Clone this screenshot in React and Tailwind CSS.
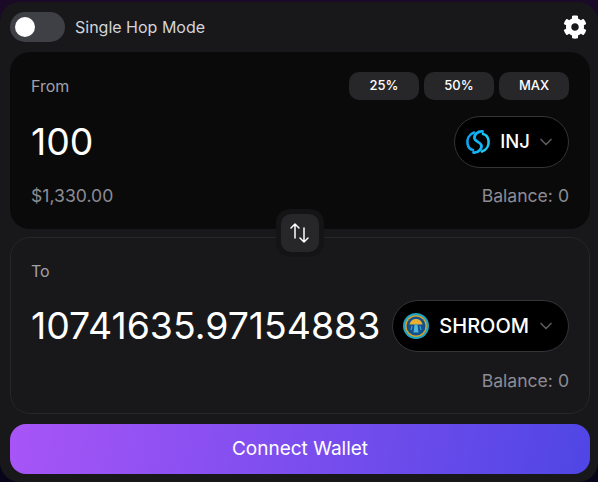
import React from "react";
import { ChevronDown } from "lucide-react";
import { FaCog } from "react-icons/fa";

function SwapArrows() {
  return (
    <svg viewBox="0 0 24 24" className="w-[24px] h-[24px]" fill="none" stroke="#fff" strokeWidth="1.500" strokeLinecap="round" strokeLinejoin="round">
      <path d="M7 17V3M3 7l4-4 4 4" />
      <path d="M16 7v14M12 17l4 4 4-4" />
    </svg>
  );
}

function InjIcon() {
  return (
    <svg viewBox="0 0 26 26" className="w-[26px] h-[26px]" fill="none" strokeLinecap="round">
      <path d="M9 3.500C4 5.500 1.800 10 2.500 14.500 3 18 5.500 20.500 8 21" stroke="#0ea5f0" strokeWidth="2.600" />
      <path d="M17 22.500C22 20.500 24.200 16 23.500 11.500 23 8 20.500 5.500 18 5" stroke="#1cc8f5" strokeWidth="2.600" />
      <path d="M17.500 2.500C13 2 9 5.500 9.500 9.500 10 12.500 15 13 16.300 16 17.300 19.500 13.500 24 8.500 23.500" stroke="#12b4f5" strokeWidth="2.800" />
    </svg>
  );
}

function ShroomIcon() {
  return (
    <svg viewBox="0 0 26 26" className="w-[26px] h-[26px]">
      <circle cx="13" cy="13" r="13" fill="#1fa5c4" />
      <circle cx="13" cy="13" r="10.800" fill="#e0a020" />
      <circle cx="13" cy="13" r="9.500" fill="#12508f" />
      <path d="M6.500 11.500C7.500 7.500 10 6 13 6s5.500 1.500 6.500 5.500z" fill="#e8b030" />
      <path d="M11.500 11.500h3l1 8h-5z" fill="#4fb4d8" />
      <path d="M9 13l-1 4M17 13l1 4" stroke="#3aa0c8" strokeWidth="1.200" />
    </svg>
  );
}

function TokenButton({ icon, label, labelClass, chevronClass }) {
  return (
    <button className="h-[52px] flex items-center rounded-full bg-black border border-[#333338] pl-[10px] pr-[12px] shrink-0">
      {icon}
      <span className={`font-medium text-white ${labelClass}`}>{label}</span>
      <ChevronDown className={`w-[20px] h-[20px] text-[#5a5a60] ${chevronClass}`} strokeWidth={2} />
    </button>
  );
}

function Pct({ children }) {
  return (
    <button className="w-[70px] h-[28px] rounded-[10px] bg-[#27272a] text-white text-[13px] font-medium flex items-center justify-center">
      {children}
    </button>
  );
}

export default function App() {
  return (
    <div className="w-[598px] h-[482px] bg-[linear-gradient(#1a0a28,#08041a)] overflow-hidden font-['Inter','Liberation_Sans',sans-serif]">
      <div className="mt-[2px] h-[480px] bg-[#18181b] rounded-[20px] pl-[10px] pr-[8px] pt-[10px] flex flex-col">
        <div className="h-[30px] flex items-center justify-between mb-[10px]">
          <div className="flex items-center">
            <div className="w-[55px] h-[30px] rounded-full bg-[#3f3f46] flex items-center pl-[5px]">
              <div className="w-[20px] h-[20px] rounded-full bg-white" />
            </div>
            <span className="ml-[10px] text-[16px] text-[#d4d4d8]">Single Hop Mode</span>
          </div>
          <FaCog className="w-[24px] h-[24px] text-white mr-[3px]" />
        </div>

        <div className="relative h-[177px] rounded-[20px] bg-[#0a0a0a] px-[21px] pt-[20px] flex flex-col">
          <div className="flex items-center justify-between h-[28px]">
            <span className="text-[16px] text-[#a1a1aa]">From</span>
            <div className="flex gap-[5px]">
              <Pct>25%</Pct>
              <Pct>50%</Pct>
              <Pct>MAX</Pct>
            </div>
          </div>
          <div className="flex items-center justify-between mt-[16px]">
            <span className="text-[37.400px] text-white leading-none">100</span>
            <TokenButton icon={<InjIcon />} label="INJ" labelClass="ml-[9px] text-[18.500px]" chevronClass="ml-[6px]" />
          </div>
          <div className="flex items-center justify-between mt-[16px] text-[17.600px] leading-[24px] text-[#8c8c94]">
            <span>$1,330.00</span>
            <span>Balance: 0</span>
          </div>
          <div className="absolute left-1/2 -translate-x-1/2 -bottom-[28px] z-10 w-[48px] h-[48px] rounded-[14px] bg-[#141416] flex items-center justify-center">
            <div className="w-[38px] h-[38px] rounded-[10px] bg-[#27272a] flex items-center justify-center">
              <SwapArrows />
            </div>
          </div>
        </div>

        <div className="mt-[8px] h-[177px] rounded-[20px] border border-[#27272a] bg-[#18181b] px-[20px] pt-[19px] flex flex-col">
          <span className="text-[16px] leading-[28px] text-[#a1a1aa]">To</span>
          <div className="flex items-center justify-between mt-[15px]">
            <span className="text-[37.400px] text-white leading-none">10741635.97154883</span>
            <TokenButton icon={<ShroomIcon />} label="SHROOM" labelClass="ml-[10px] text-[20px]" chevronClass="ml-[7px]" />
          </div>
          <div className="flex items-center justify-end mt-[17px] text-[17.600px] leading-[24px] text-[#8c8c94]">
            <span>Balance: 0</span>
          </div>
        </div>

        <button className="mt-[10px] h-[50px] w-full shrink-0 rounded-[16px] bg-[linear-gradient(100deg,#a855f7,#4f46e5)] text-white text-[19px] font-normal">
          Connect Wallet
        </button>
      </div>
    </div>
  );
}
